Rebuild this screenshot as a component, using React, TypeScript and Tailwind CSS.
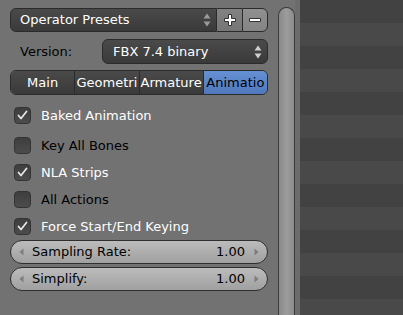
const font = { fontFamily: '"DejaVu Sans", Verdana, sans-serif' }

function UpDown({ color }: { color: string }) {
  return (
    <svg width="8" height="14" viewBox="0 0 8 14">
      <path d="M4 0.5 L7.5 5.5 L0.5 5.5 Z" fill={color} />
      <path d="M4 13.5 L7.5 8.5 L0.5 8.5 Z" fill={color} />
    </svg>
  )
}

function Check({ checked, label }: { checked: boolean; label: string }) {
  return (
    <div className="flex items-center h-[27px] pl-[4px]">
      <div className="w-[17px] h-[17px] rounded-[4px] border border-[#333333] bg-gradient-to-b from-[#3e3e3e] to-[#4c4c4c] flex items-center justify-center">
        {checked && (
          <svg width="13" height="13" viewBox="0 0 13 13">
            <path d="M2.5 6.5 L5 9.5 L10.5 2.5" stroke="#e8e8e8" strokeWidth="1.7" fill="none" strokeLinecap="round" strokeLinejoin="round" />
          </svg>
        )}
      </div>
      <span className={`ml-[10px] text-[13px] ${checked ? 'text-white' : 'text-black'}`}>{label}</span>
    </div>
  )
}

function Slider({ label, value }: { label: string; value: string }) {
  return (
    <div className="h-[24px] rounded-full border border-[#2f2f2f] bg-gradient-to-b from-[#bcbcbc] to-[#a0a0a0] flex items-center pl-[8px] pr-[8px] text-[13px] text-black">
      <svg width="5" height="8" viewBox="0 0 5 8" className="mr-[8px]">
        <path d="M4.5 0.5 L0.5 4 L4.5 7.5 Z" fill="#7c7c7c" />
      </svg>
      <span>{label}</span>
      <span className="ml-auto mr-[9px]">{value}</span>
      <svg width="5" height="8" viewBox="0 0 5 8">
        <path d="M0.5 0.5 L4.5 4 L0.5 7.5 Z" fill="#7c7c7c" />
      </svg>
    </div>
  )
}

export default function App() {
  const tabs = ['Main', 'Geometri', 'Armature', 'Animatio']
  const stripes = Array.from({ length: 14 }, (_, i) => i)
  return (
    <div className="flex w-[403px] h-[315px] overflow-hidden bg-[#727272]" style={font}>
      <div className="w-[278px] shrink-0 pl-[10px] pr-[10px] pt-[8px]">
        <div className="flex h-[24px]">
          <div className="flex-1 flex items-center rounded-l-[6px] border border-[#2b2b2b] bg-gradient-to-b from-[#4a4a4a] to-[#3a3a3a] pl-[9px] pr-[5px] text-white text-[13px]">
            <span>Operator Presets</span>
            <span className="ml-auto"><UpDown color="#9a9a9a" /></span>
          </div>
          <div className="w-[25px] flex items-center justify-center border-y border-[#2b2b2b] bg-gradient-to-b from-[#828282] to-[#767676]">
            <svg width="14" height="14" viewBox="0 0 14 14">
              <path d="M5.5 1.5 H8.5 V5.5 H12.5 V8.5 H8.5 V12.5 H5.5 V8.5 H1.5 V5.5 H5.5 Z" fill="#ffffff" stroke="#333" strokeWidth="1" />
            </svg>
          </div>
          <div className="w-[26px] flex items-center justify-center rounded-r-[6px] border border-[#2b2b2b] bg-gradient-to-b from-[#909090] to-[#848484]">
            <svg width="14" height="6" viewBox="0 0 14 6">
              <path d="M1.5 1.5 H12.5 V4.5 H1.5 Z" fill="#ffffff" stroke="#333" strokeWidth="1" />
            </svg>
          </div>
        </div>

        <div className="flex items-center h-[25px] mt-[7px]">
          <span className="w-[92px] pl-[10px] text-[13px] text-black">Version:</span>
          <div className="flex-1 h-full flex items-center rounded-[6px] border border-[#2b2b2b] bg-gradient-to-b from-[#4a4a4a] to-[#3a3a3a] pl-[10px] pr-[5px] text-white text-[13px]">
            <span>FBX 7.4 binary</span>
            <span className="ml-auto"><UpDown color="#d0d0d0" /></span>
          </div>
        </div>

        <div className="flex h-[25px] mt-[6px] rounded-[6px] border border-[#2b2b2b] overflow-hidden">
          {tabs.map((t, i) => (
            <div
              key={t}
              className={`flex-1 flex items-center justify-center text-[13px] overflow-hidden whitespace-nowrap ${i > 0 ? 'border-l border-[#2b2b2b]' : ''} ${i === 3 ? 'bg-gradient-to-b from-[#6690d4] to-[#4f78bd] text-black' : 'bg-gradient-to-b from-[#4a4a4a] to-[#3a3a3a] text-white'}`}
            >
              {t}
            </div>
          ))}
        </div>

        <div className="mt-[7px]">
          <div className="-mb-[1px]"><Check checked label="Baked Animation" /></div>
          <div className="mt-[4px]"><Check checked={false} label="Key All Bones" /></div>
          <Check checked label="NLA Strips" />
          <Check checked={false} label="All Actions" />
          <Check checked label="Force Start/End Keying" />
        </div>

        <div className="flex flex-col gap-[3px]">
          <Slider label="Sampling Rate:" value="1.00" />
          <Slider label="Simplify:" value="1.00" />
        </div>
      </div>

      <div className="w-[17px] shrink-0 pt-[7px]">
        <div className="h-[330px] rounded-t-full border-x border-t border-[#3a3a3a] bg-gradient-to-r from-[#8a8a8a] via-[#9c9c9c] to-[#8c8c8c]" />
      </div>
      <div className="w-[5px] shrink-0 bg-[#6c6c6c]" />

      <div className="flex-1 flex flex-col">
        {stripes.map((i) => (
          <div key={i} className={`h-[23px] shrink-0 ${i % 2 === 0 ? 'bg-[#424242]' : 'bg-[#494949]'}`} />
        ))}
      </div>
    </div>
  )
}
